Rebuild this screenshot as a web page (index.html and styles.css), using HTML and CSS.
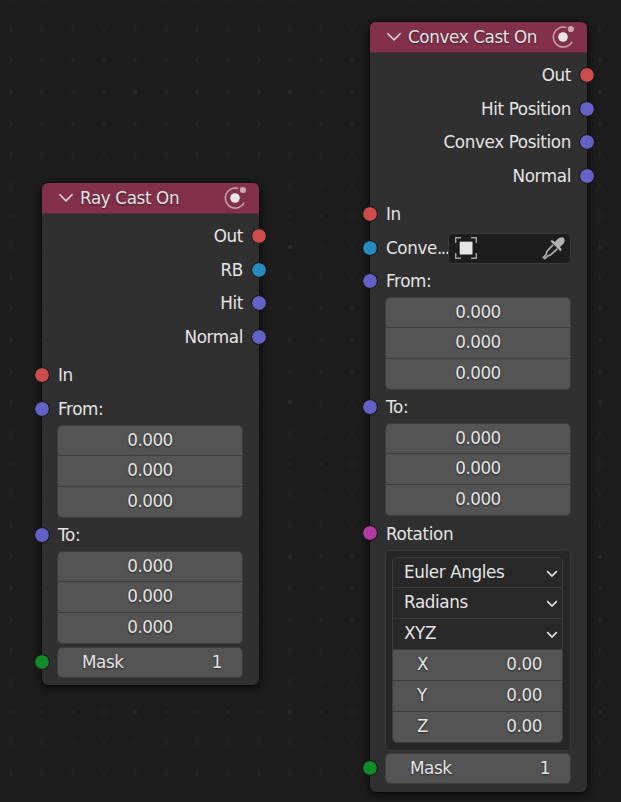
FILE: index.html
```html
<!DOCTYPE html>
<html lang="en">
<head>
<meta charset="utf-8">
<title>Node Editor</title>
<link rel="stylesheet" href="styles.css">
</head>
<body>
<svg class="defs" width="0" height="0" aria-hidden="true">
  <symbol id="chevron" viewBox="0 0 16 10"><path d="M1.4 1.3 L8 7.8 L14.6 1.3" fill="none" stroke="#e0d4d8" stroke-width="1.6"/></symbol>
  <symbol id="physics" viewBox="0 0 24 24">
    <path d="M15.2 2.5 A10 10 0 1 0 21.2 16.6" fill="none" stroke="#c9a3ae" stroke-width="1.5"/>
    <circle cx="19.9" cy="4" r="3.1" fill="#caa6b1"/>
    <circle cx="12" cy="12" r="4.8" fill="#eae6e7"/>
  </symbol>
  <symbol id="drop" viewBox="0 0 12 8"><path d="M1.2 1.2 L6 6 L10.8 1.2" fill="none" stroke="#e2e2e2" stroke-width="1.7"/></symbol>
</svg>

<main class="canvas">
  <section class="node ray">
    <header class="head">
      <svg class="chev"><use href="#chevron"/></svg><span class="title">Ray Cast On</span><svg class="phys"><use href="#physics"/></svg>
    </header>
    <div class="outputs">
      <div class="row">Out<i class="socket flow"></i></div>
      <div class="row short">RB<i class="socket object"></i></div>
      <div class="row">Hit<i class="socket vector"></i></div>
      <div class="row short">Normal<i class="socket vector"></i></div>
    </div>
    <div class="inputs">
      <div class="row"><i class="socket flow"></i>In</div>
      <div class="row short"><i class="socket vector"></i>From:</div>
      <div class="fields"><div>0.000</div><div>0.000</div><div>0.000</div></div>
      <div class="row short"><i class="socket vector"></i>To:</div>
      <div class="fields"><div>0.000</div><div>0.000</div><div>0.000</div></div>
      <div class="mask-row"><i class="socket int"></i><div class="mask"><span>Mask</span><span>1</span></div></div>
    </div>
  </section>

  <section class="node convex">
    <header class="head">
      <svg class="chev"><use href="#chevron"/></svg><span class="title">Convex Cast On</span><svg class="phys"><use href="#physics"/></svg>
    </header>
    <div class="outputs">
      <div class="row">Out<i class="socket flow"></i></div>
      <div class="row short">Hit Position<i class="socket vector"></i></div>
      <div class="row">Convex Position<i class="socket vector"></i></div>
      <div class="row short">Normal<i class="socket vector"></i></div>
    </div>
    <div class="inputs">
      <div class="row"><i class="socket flow"></i>In</div>
      <div class="row"><i class="socket object"></i><span class="clip">Conve<span class="dots">...</span></span>
        <div class="picker">
          <svg width="22" height="22" viewBox="0 0 22 22">
            <path d="M0.7 6 V0.7 H6 M16 0.7 H21.3 V6 M21.3 16 V21.3 H16 M6 21.3 H0.7 V16" fill="none" stroke="#a2a2a2" stroke-width="1.4"/>
            <rect x="4.7" y="4.7" width="12.8" height="12.8" fill="#e6e6e6"/>
          </svg>
          <svg width="24" height="24" viewBox="0 0 24 24">
            <path d="M11 8.8 L5.4 14.8 Q4.4 16 4.3 18.2 L1.4 21.4 L2.8 22.6 L5.8 19.8 Q8 19.6 9.2 18.4 L15.2 12.8" fill="none" stroke="#acacac" stroke-width="1.7"/>
            <path d="M8.4 5.2 L10 4 L12.8 6 L16 2.8 Q19 0.4 21.8 1.8 Q23.8 4.8 21.4 7.8 L18 11 L19.8 13.4 L18.4 15.2 Z" fill="#b2b2b2"/>
          </svg>
        </div>
      </div>
      <div class="row tight"><i class="socket vector"></i>From:</div>
      <div class="fields"><div>0.000</div><div>0.000</div><div>0.000</div></div>
      <div class="row short"><i class="socket vector"></i>To:</div>
      <div class="fields"><div>0.000</div><div>0.000</div><div>0.000</div></div>
      <div class="row rot"><i class="socket rotation"></i>Rotation</div>
      <div class="group">
        <div class="stack">
          <div class="select"><span>Euler Angles</span><svg class="drop"><use href="#drop"/></svg></div>
          <div class="select"><span>Radians</span><svg class="drop"><use href="#drop"/></svg></div>
          <div class="select"><span>XYZ</span><svg class="drop"><use href="#drop"/></svg></div>
          <div class="axis"><span>X</span><span>0.00</span></div>
          <div class="axis"><span>Y</span><span>0.00</span></div>
          <div class="axis"><span>Z</span><span>0.00</span></div>
        </div>
      </div>
      <div class="mask-row near"><i class="socket int"></i><div class="mask"><span>Mask</span><span>1</span></div></div>
    </div>
  </section>
</main>
</body>
</html>
```
FILE: styles.css
```css
* { box-sizing: border-box; }

body {
  margin: 0;
  background: #1d1d1d;
  color: #e4e4e4;
  font: 16.8px/20px "DejaVu Sans", sans-serif;
  letter-spacing: -0.38px;
}

.defs { position: absolute; }

.canvas {
  position: relative;
  width: 621px;
  height: 802px;
  overflow: hidden;
  background:
    conic-gradient(from 90deg at 151px 151px, #292929 90deg, transparent 0) 137px 94px / 155px 155px,
    conic-gradient(from 90deg at 27px 27px, #232323 90deg, transparent 0) 13px 1px / 31px 31px,
    #1d1d1d;
}

.node {
  position: absolute;
  width: 217px;
  border-radius: 6px;
  background: #303030;
  box-shadow: 0 0 0 1px rgba(0, 0, 0, .3), 0 2px 10px 1px rgba(0, 0, 0, .65);
}
.ray { left: 42px; top: 183px; height: 502px; }
.convex { left: 370px; top: 22px; height: 770px; }

.head {
  display: flex;
  align-items: center;
  height: 31px;
  padding: 0 12px 0 16px;
  border-radius: 6px 6px 0 0;
  border-bottom: 1px solid #5c2a3a;
  background: #83314a;
  text-shadow: 0 1px 2px rgba(0, 0, 0, .5);
}
.chev { width: 16px; height: 10px; margin: 0 6px 1px 0; }
.title { flex: 1; white-space: nowrap; }
.phys { width: 24px; height: 24px; }

.outputs { padding-top: 5px; }
.outputs .row { justify-content: flex-end; padding-right: 16px; }
.inputs { padding-top: 5px; }

.row {
  position: relative;
  display: flex;
  align-items: center;
  height: 34px;
  padding-left: 16px;
}
.short { height: 33px; }
.tight { height: 32px; }
.rot { padding-top: 1px; }

.socket {
  position: absolute;
  left: -8px;
  top: 50%;
  width: 16px;
  height: 16px;
  margin-top: -8px;
  border: 1px solid #191919;
  border-radius: 50%;
  background-clip: padding-box;
}
.outputs .socket { left: auto; right: -8px; }
.flow { background-color: #cc4c4c; }
.object { background-color: #268bc0; }
.vector { background-color: #6363c7; }
.rotation { background-color: #b33aa3; }
.int { background-color: #128a29; }

.fields, .mask {
  margin: 0 16px 0 15px;
  border: 1px solid #3d3d3d;
  border-radius: 5px;
  background: #545454;
  text-shadow: 0 1px 2px rgba(0, 0, 0, .6);
}
.fields { height: 93px; }
.fields div {
  height: 29px;
  line-height: 28px;
  text-align: center;
  letter-spacing: -0.5px;
}
.fields div + div { height: 31px; border-top: 1px solid #3d3d3d; }

.mask-row { position: relative; padding-top: 3px; }
.near { padding-top: 2px; }
.mask-row .socket { top: 18px; }
.near .socket { top: 17px; }
.mask {
  display: flex;
  justify-content: space-between;
  height: 31px;
  padding: 0 20px 0 24px;
  line-height: 28px;
}

.clip { width: 62px; white-space: nowrap; }
.dots { letter-spacing: -1.5px; }
.picker {
  display: flex;
  align-items: center;
  justify-content: space-between;
  width: 123px;
  height: 31px;
  padding: 0 4px 0 6px;
  border: 1px solid #3a3a3a;
  border-radius: 5px;
  background: #1d1d1d;
}

.group {
  height: 201px;
  margin: 0 16px 0 15px;
  padding: 6px 7px 6px 6px;
  border: 1px solid #3b3b3b;
  border-radius: 5px;
  background: #262626;
}
.stack {
  height: 186px;
  overflow: hidden;
  border: 1px solid #3d3d3d;
  border-radius: 5px;
  background: #282828;
}
.select, .axis {
  display: flex;
  align-items: center;
  justify-content: space-between;
  height: 31px;
  border-top: 1px solid #3d3d3d;
}
.select:first-child { height: 29px; border-top: 0; }
.select { padding: 0 4px 2px 11px; }
.drop { width: 12px; height: 8px; margin-top: 4px; }
.axis {
  padding: 0 20px 2px 24px;
  background: #545454;
  text-shadow: 0 1px 2px rgba(0, 0, 0, .6);
}
```
